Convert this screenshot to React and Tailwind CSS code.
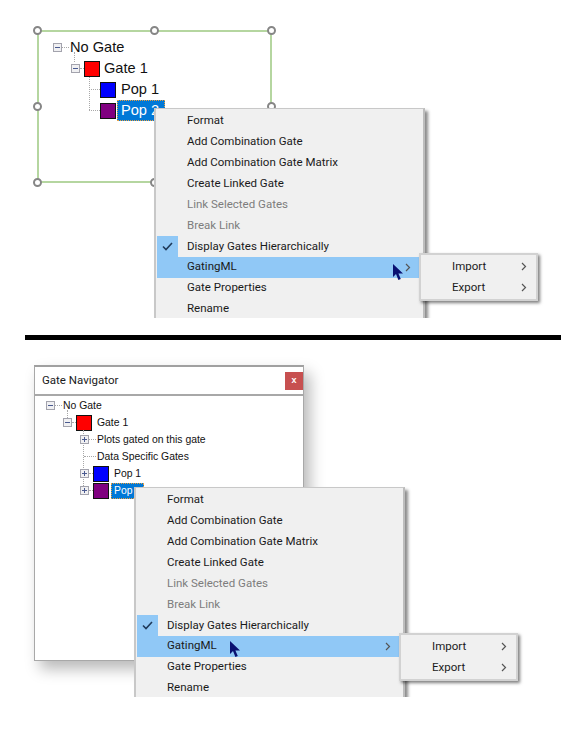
const FONT = "font-['Roboto',sans-serif]";
const ARIAL = "font-['Liberation_Sans',Arial,sans-serif]";

function Box({ plus = false }) {
  return (
    <span className="relative block shrink-0 w-[9px] h-[9px] border border-[#a3a3ad] bg-[#f0f0f2]">
      <span className="absolute left-[1px] top-[3px] w-[5px] h-px bg-[#4a5a90]" />
      {plus && <span className="absolute left-[3px] top-[1px] w-px h-[5px] bg-[#4a5a90]" />}
    </span>
  );
}

function Swatch({ color }) {
  return <span className="block shrink-0 w-[16px] h-[16px] border border-[#111]" style={{ backgroundColor: color }} />;
}

function HDots({ w }) {
  return <span className="block shrink-0 h-0 border-t border-dotted border-[#a8a8a8]" style={{ width: w }} />;
}

function Chevron() {
  return (
    <svg width="6" height="9" viewBox="0 0 6 9" className="block shrink-0">
      <path d="M1 1l3.5 3.5L1 8" fill="none" stroke="#555" strokeWidth="1.2" />
    </svg>
  );
}

function Cursor({ className }) {
  return (
    <svg width="12" height="17" viewBox="0 0 12 17" className={className}>
      <path d="M1 0v13l3-3 2.4 6 2.4-1-2.4-5.6H11z" fill="#0a1172" />
    </svg>
  );
}

function Row({ label, tone = "text-[#1a1a1a]", check, hot, arrow }) {
  return (
    <div className={`relative flex items-center h-[20.9px] pl-[30px] pr-[9px] ${hot ? "bg-[#90c8f6]" : ""}`}>
      {check && (
        <span className="absolute left-0 top-0 flex w-[21px] h-[20.9px] items-center justify-center bg-[#90c8f6]">
          <svg width="11" height="9" viewBox="0 0 11 9">
            <path d="M1 4.5l3 3 6-6.5" fill="none" stroke="#1f3a5a" strokeWidth="1.6" />
          </svg>
        </span>
      )}
      <span className={`flex-1 text-[11.5px] leading-none whitespace-nowrap ${tone}`}>{label}</span>
      {arrow && <Chevron />}
    </div>
  );
}

function Menu({ className }) {
  const gray = "text-[#7d7d7d]";
  return (
    <div className={`absolute w-[271px] h-[240px] bg-[#f0f0f0] border-2 border-t border-[#c8c8c8] border-r-[#bdbdbd] pl-[1px] pr-[3px] pt-[1.5px] shadow-[3px_3px_3px_rgba(0,0,0,0.45)] ${FONT} ${className}`}>
      <Row label="Format" />
      <Row label="Add Combination Gate" />
      <Row label="Add Combination Gate Matrix" />
      <Row label="Create Linked Gate" />
      <Row label="Link Selected Gates" tone={gray} />
      <Row label="Break Link" tone={gray} />
      <Row label="Display Gates Hierarchically" check />
      <Row label="GatingML" hot arrow />
      <Row label="Gate Properties" />
      <Row label="Rename" />
    </div>
  );
}

function SubMenu({ className }) {
  return (
    <div className={`absolute w-[119px] h-[48px] bg-[#f0f0f0] border-2 border-[#d2d2d2] pt-[1px] shadow-[2px_2px_3px_rgba(0,0,0,0.5)] ${FONT} ${className}`}>
      {["Import", "Export"].map((t) => (
        <div key={t} className="flex items-center h-[20.9px] pl-[31px] pr-[9px]">
          <span className="flex-1 text-[11.5px] leading-none text-[#1a1a1a]">{t}</span>
          <Chevron />
        </div>
      ))}
    </div>
  );
}

function Handle({ className }) {
  return <span className={`absolute w-[9px] h-[9px] rounded-full bg-white border-2 border-[#868686] ${className}`} />;
}

function TopTreeRow({ pad, children }) {
  return <div className={`flex items-center h-[21px] text-[14.6px] text-[#111] ${ARIAL}`} style={{ paddingLeft: pad }}>{children}</div>;
}

function SmallRow({ pad, children }) {
  return <div className={`flex items-center h-[17px] text-[10.4px] text-[#111] ${ARIAL}`} style={{ paddingLeft: pad }}>{children}</div>;
}

export default function App() {
  return (
    <div className="w-[584px] h-[730px] bg-white overflow-hidden">
      {/* top panel */}
      <div className="relative h-[318px] overflow-hidden">
        <div className="absolute left-[37px] top-[30px] w-[235px] h-[153px] border-2 border-[#b5d6a0] pt-[5px]">
          <span className="absolute left-[35px] top-[20px] h-[10px] border-l border-dotted border-[#a8a8a8]" />
          <span className="absolute left-[50px] top-[45px] h-[33px] border-l border-dotted border-[#a8a8a8]" />
          <TopTreeRow pad={14}>
            <Box /><HDots w={7} /><span className="ml-px">No Gate</span>
          </TopTreeRow>
          <TopTreeRow pad={32}>
            <Box /><HDots w={4} /><Swatch color="#ff0000" /><span className="ml-[4px]">Gate 1</span>
          </TopTreeRow>
          <TopTreeRow pad={50}>
            <HDots w={11} /><Swatch color="#0000ff" /><span className="ml-[5px]">Pop 1</span>
          </TopTreeRow>
          <TopTreeRow pad={50}>
            <HDots w={11} /><Swatch color="#800080" />
            <span className="ml-px h-[21px] w-[48px] pl-[4px] bg-[#0078d7] text-white flex items-center outline-1 outline-dotted outline-[#e8a040] -outline-offset-1">Pop 2</span>
          </TopTreeRow>
        </div>
        <Handle className="left-[33px] top-[26px]" />
        <Handle className="left-[150px] top-[26px]" />
        <Handle className="left-[267px] top-[26px]" />
        <Handle className="left-[33px] top-[102px]" />
        <Handle className="left-[267px] top-[102px]" />
        <Handle className="left-[33px] top-[178px]" />
        <Handle className="left-[150px] top-[178px]" />
        <Menu className="left-[154px] top-[108px]" />
        <SubMenu className="left-[419px] top-[253px]" />
        <Cursor className="absolute left-[392px] top-[264px]" />
      </div>

      <div className="h-[17px]" />
      <div className="ml-[25px] w-[536px] h-[5px] bg-black" />

      {/* bottom panel */}
      <div className="relative h-[357px] overflow-hidden">
        <div className="absolute left-[34px] top-[25px] w-[270px] h-[296px] bg-white border border-[#a8a8a8] border-t-2 border-t-[#a0a0a0] shadow-[6px_8px_14px_rgba(0,0,0,0.28)]">
          <span className="absolute left-[32px] top-[43px] h-[8px] border-l border-dotted border-[#a8a8a8]" />
          <span className="absolute left-[48px] top-[63px] h-[60px] border-l border-dotted border-[#a8a8a8]" />
          <div className="flex items-center justify-between h-[29px] pl-[7px] pt-[1px] border-b-2 border-[#a8a8a8]">
            <span className={`text-[11.5px] text-[#1a1a1a] ${FONT}`}>Gate Navigator</span>
            <span className={`flex w-[18px] h-[18px] items-center justify-center bg-[#c75050] text-white text-[9px] font-bold ${ARIAL}`}>x</span>
          </div>
          <div className="pt-[1px]">
            <SmallRow pad={11}><Box /><HDots w={7} /><span className="ml-px">No Gate</span></SmallRow>
            <SmallRow pad={28}><Box /><HDots w={4} /><Swatch color="#ff0000" /><span className="ml-[5px]">Gate 1</span></SmallRow>
            <SmallRow pad={45}><Box plus /><HDots w={7} /><span className="ml-px">Plots gated on this gate</span></SmallRow>
            <SmallRow pad={49}><HDots w={12} /><span className="ml-px">Data Specific Gates</span></SmallRow>
            <SmallRow pad={45}><Box plus /><HDots w={4} /><Swatch color="#0000ff" /><span className="ml-[5px]">Pop 1</span></SmallRow>
            <SmallRow pad={45}><Box plus /><HDots w={4} /><Swatch color="#800080" />
              <span className="ml-[2px] h-[16px] w-[33px] pl-[3px] bg-[#0078d7] text-white flex items-center outline-1 outline-dotted outline-[#e8a040] -outline-offset-1">Pop</span>
            </SmallRow>
          </div>
        </div>
        <Menu className="left-[134px] top-[147px]" />
        <SubMenu className="left-[399px] top-[293px]" />
        <Cursor className="absolute left-[229px] top-[301px]" />
      </div>
    </div>
  );
}
